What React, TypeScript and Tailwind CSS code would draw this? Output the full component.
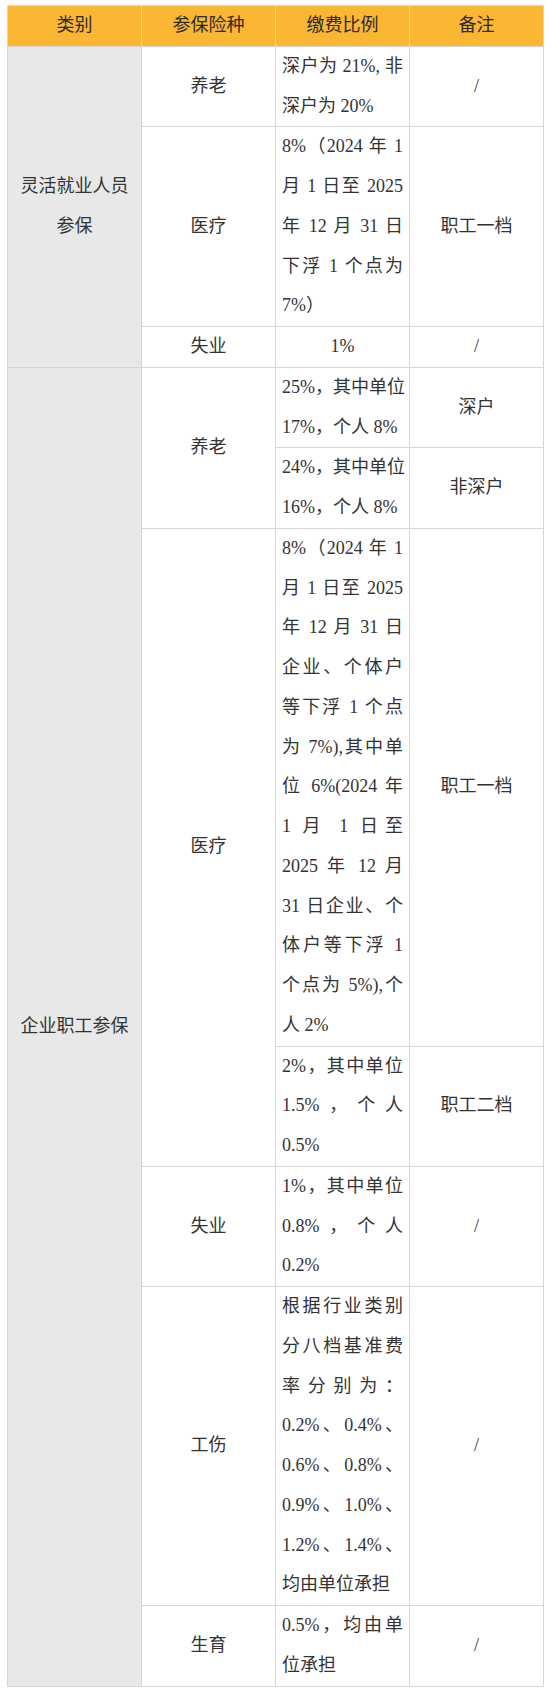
import React from "react";

/* table tokens */
const cell = "border border-[#d6d6d6] px-[6px] py-0 align-middle";
const grey = "bg-[#e8e8e8]";

function cx(...c: (string | false | null | undefined)[]) {
  return c.filter(Boolean).join(" ");
}

// centred lines (labels, remarks)
function Center({ lines }: { lines: string[] }) {
  return (
    <>
      {lines.map((l, i) => (
        <div key={i} className="text-center whitespace-nowrap">
          {l}
        </div>
      ))}
    </>
  );
}

// justified lines, last one left aligned (like the Word table)
function Just({ lines }: { lines: string[] }) {
  return (
    <>
      {lines.map((l, i) => (
        <div
          key={i}
          className={cx(
            "whitespace-nowrap",
            i < lines.length - 1 ? "text-justify [text-align-last:justify]" : "text-left"
          )}
        >
          {l}
        </div>
      ))}
    </>
  );
}

export default function App() {
  return (
    <main className="min-h-screen bg-white pt-[5px] pl-[7px]">
      <table className="table-fixed border-collapse w-[536px] text-[18px] leading-[39.75px] text-[#333] font-['Liberation_Serif','Noto_Sans_CJK_SC',serif]">
        <colgroup>
          <col className="w-[134px]" />
          <col className="w-[134px]" />
          <col className="w-[134px]" />
          <col className="w-[134px]" />
        </colgroup>
        <thead>
          <tr className="bg-[#fbb633]">
            {["类别", "参保险种", "缴费比例", "备注"].map((h) => (
              <th key={h} className={cx(cell, "font-normal text-center text-[#2b2b2b]")}>
                {h}
              </th>
            ))}
          </tr>
        </thead>
        <tbody>
          {/* 灵活就业人员 */}
          <tr>
            <td rowSpan={3} className={cx(cell, grey)}>
              <Center lines={["灵活就业人员", "参保"]} />
            </td>
            <td className={cell}>
              <Center lines={["养老"]} />
            </td>
            <td className={cell}>
              <Just lines={["深户为 21%, 非", "深户为 20%"]} />
            </td>
            <td className={cell}>
              <Center lines={["/"]} />
            </td>
          </tr>
          <tr>
            <td className={cell}>
              <Center lines={["医疗"]} />
            </td>
            <td className={cell}>
              <Just lines={["8%（2024 年 1", "月 1 日至 2025", "年 12 月 31 日", "下浮 1 个点为", "7%）"]} />
            </td>
            <td className={cell}>
              <Center lines={["职工一档"]} />
            </td>
          </tr>
          <tr>
            <td className={cell}>
              <Center lines={["失业"]} />
            </td>
            <td className={cell}>
              <Center lines={["1%"]} />
            </td>
            <td className={cell}>
              <Center lines={["/"]} />
            </td>
          </tr>

          {/* 企业职工 */}
          <tr>
            <td rowSpan={7} className={cx(cell, grey)}>
              <Center lines={["企业职工参保"]} />
            </td>
            <td rowSpan={2} className={cell}>
              <Center lines={["养老"]} />
            </td>
            <td className={cell}>
              <Just lines={["25%，其中单位", "17%，个人 8%"]} />
            </td>
            <td className={cell}>
              <Center lines={["深户"]} />
            </td>
          </tr>
          <tr>
            <td className={cell}>
              <Just lines={["24%，其中单位", "16%，个人 8%"]} />
            </td>
            <td className={cell}>
              <Center lines={["非深户"]} />
            </td>
          </tr>
          <tr>
            <td rowSpan={2} className={cell}>
              <Center lines={["医疗"]} />
            </td>
            <td className={cell}>
              <Just
                lines={[
                  "8%（2024 年 1",
                  "月 1 日至 2025",
                  "年 12 月 31 日",
                  "企业、个体户",
                  "等下浮 1 个点",
                  "为 7%),其中单",
                  "位 6%(2024 年",
                  "1 月 1 日至",
                  "2025 年 12 月",
                  "31 日企业、个",
                  "体户等下浮 1",
                  "个点为 5%),个",
                  "人 2%",
                ]}
              />
            </td>
            <td className={cell}>
              <Center lines={["职工一档"]} />
            </td>
          </tr>
          <tr>
            <td className={cell}>
              <Just lines={["2%，其中单位", "1.5%，个人", "0.5%"]} />
            </td>
            <td className={cell}>
              <Center lines={["职工二档"]} />
            </td>
          </tr>
          <tr>
            <td className={cell}>
              <Center lines={["失业"]} />
            </td>
            <td className={cell}>
              <Just lines={["1%，其中单位", "0.8%，个人", "0.2%"]} />
            </td>
            <td className={cell}>
              <Center lines={["/"]} />
            </td>
          </tr>
          <tr>
            <td className={cell}>
              <Center lines={["工伤"]} />
            </td>
            <td className={cell}>
              <Just
                lines={[
                  "根据行业类别",
                  "分八档基准费",
                  "率分别为：",
                  "0.2%、0.4%、",
                  "0.6%、0.8%、",
                  "0.9%、1.0%、",
                  "1.2%、1.4%、",
                  "均由单位承担",
                ]}
              />
            </td>
            <td className={cell}>
              <Center lines={["/"]} />
            </td>
          </tr>
          <tr>
            <td className={cell}>
              <Center lines={["生育"]} />
            </td>
            <td className={cell}>
              <Just lines={["0.5%，均由单", "位承担"]} />
            </td>
            <td className={cell}>
              <Center lines={["/"]} />
            </td>
          </tr>
        </tbody>
      </table>
    </main>
  );
}
